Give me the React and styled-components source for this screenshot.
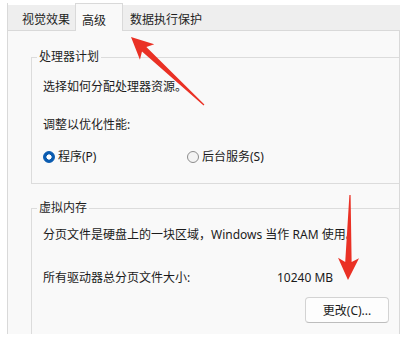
import React from "react";
import styled, { createGlobalStyle } from "styled-components";

const Global = createGlobalStyle`
  html, body { margin: 0; padding: 0; background: #fff; }
  body { font-family: "Noto Sans", "Noto Sans CJK SC", sans-serif; }
`;

const Root = styled.div`
  position: relative;
  width: 401px;
  height: 342px;
  box-sizing: border-box;
  padding: 3px 0 0 7px;
  overflow: hidden;
  background: #fff;
  font-size: 12px;
  color: #1b1b1b;
`;

const Frame = styled.div`
  width: 393px;
  height: 331px;
  display: flex;
  flex-direction: column;
`;

const TabStrip = styled.div`
  display: flex;
  flex: none;
  height: 27px;
  background: linear-gradient(to bottom, #fff 0 2px, #eeeeee 2px);
  position: relative;
  z-index: 1;
`;

const Tab = styled.div`
  box-sizing: border-box;
  display: flex;
  align-items: center;
  height: ${(p) => (p.$active ? 28 : 27)}px;
  padding: 6px ${(p) => p.$pr}px 0 ${(p) => p.$pl}px;
  background: ${(p) => (p.$active ? "#f9f9f9" : "transparent")};
  border-top: ${(p) => (p.$active ? "1px solid #d9d9d9" : "none")};
  border-left: ${(p) => (p.$active || p.$first ? "1px solid #d9d9d9" : "none")};
  border-right: ${(p) => (p.$active ? "1px solid #d9d9d9" : "none")};
  white-space: nowrap;
  line-height: 18px;
  color: #1f1f1f;
`;

const Panel = styled.div`
  flex: 1;
  box-sizing: border-box;
  border: 1px solid #d9d9d9;
  border-bottom: none;
  background: #f9f9f9;
  padding-left: 23px;
  overflow: hidden;
`;

const Group = styled.fieldset`
  box-sizing: border-box;
  width: 380px;
  min-width: 0;
  margin: ${(p) => p.$mt}px 0 0 0;
  padding: ${(p) => p.$pt}px 0 ${(p) => p.$pb}px 11px;
  border: 1px solid #dcdcdc;
`;

const Legend = styled.legend`
  padding: 0 2px;
  margin-left: -6px;
  line-height: 16px;
  color: #1f1f1f;
`;

const Line = styled.div`
  line-height: 18px;
  height: 18px;
  margin-top: ${(p) => p.$mt || 0}px;
  white-space: nowrap;
`;

const RadioRow = styled.div`
  display: grid;
  grid-template-columns: 144px auto;
  height: 18px;
  margin-top: 14px;
`;

const RadioLabel = styled.label`
  display: flex;
  align-items: center;
  gap: 3px;
  line-height: 18px;
`;

const RadioDot = styled.span`
  box-sizing: border-box;
  width: 12px;
  height: 12px;
  border-radius: 50%;
  flex: none;
  border: 1px solid ${(p) => (p.$checked ? "#0a5bb0" : "#8d8d8d")};
  background: ${(p) =>
    p.$checked
      ? "radial-gradient(circle, #ffffff 0 2.3px, #0a5bb0 2.9px)"
      : "#f4f4f4"};
`;

const InfoRow = styled.div`
  display: grid;
  grid-template-columns: 234px auto;
  line-height: 18px;
  height: 18px;
  margin-top: 25px;
`;

const ButtonRow = styled.div`
  display: flex;
  padding-left: 262px;
  margin-top: 10px;
`;

const Button = styled.button`
  box-sizing: border-box;
  width: 84px;
  height: 26px;
  padding: 0;
  display: flex;
  align-items: center;
  justify-content: center;
  font: inherit;
  font-size: 12px;
  color: #1b1b1b;
  background: #fdfdfd;
  border: 1px solid #d3d3d3;
  border-bottom-color: #bdbdbd;
  border-radius: 4px;
`;

const Overlay = styled.svg`
  position: absolute;
  left: 0;
  top: 0;
  width: 401px;
  height: 342px;
  pointer-events: none;
`;

function Arrow({ x1, y1, x2, y2, head = 22, half = 10.5, shaft = 3.2 }) {
  const dx = x2 - x1;
  const dy = y2 - y1;
  const L = Math.sqrt(dx * dx + dy * dy);
  const ang = (Math.atan2(dy, dx) * 180) / Math.PI;
  const b = L - head;
  const pts = [
    [0, -0.6],
    [b + 4, -shaft],
    [b, -half],
    [L, 0],
    [b, half],
    [b + 4, shaft],
    [0, 0.6],
  ]
    .map((p) => p.join(","))
    .join(" ");
  return (
    <polygon
      points={pts}
      fill="#ea3125"
      transform={`translate(${x1} ${y1}) rotate(${ang})`}
    />
  );
}

export default function App() {
  return (
    <Root>
      <Global />
      <Frame>
        <TabStrip>
          <Tab $first $pl={14} $pr={5}>视觉效果</Tab>
          <Tab $active $pl={6} $pr={16}>高级</Tab>
          <Tab $pl={7} $pr={6}>数据执行保护</Tab>
        </TabStrip>
        <Panel>
          <Group $mt={18} $pt={13} $pb={17}>
            <Legend>处理器计划</Legend>
            <Line>选择如何分配处理器资源。</Line>
            <Line $mt={20}>调整以优化性能:</Line>
            <RadioRow>
              <RadioLabel>
                <RadioDot $checked />
                程序(P)
              </RadioLabel>
              <RadioLabel>
                <RadioDot />
                后台服务(S)
              </RadioLabel>
            </RadioRow>
          </Group>
          <Group $mt={16} $pt={10} $pb={20}>
            <Legend>虚拟内存</Legend>
            <Line>分页文件是硬盘上的一块区域，Windows 当作 RAM 使用。</Line>
            <InfoRow>
              <span>所有驱动器总分页文件大小:</span>
              <span>10240 MB</span>
            </InfoRow>
            <ButtonRow>
              <Button>更改(C)...</Button>
            </ButtonRow>
          </Group>
        </Panel>
      </Frame>
      <Overlay viewBox="0 0 401 342">
        <Arrow x1={204} y1={105} x2={131} y2={37} />
        <Arrow x1={350} y1={195} x2={348} y2={280} />
      </Overlay>
    </Root>
  );
}
